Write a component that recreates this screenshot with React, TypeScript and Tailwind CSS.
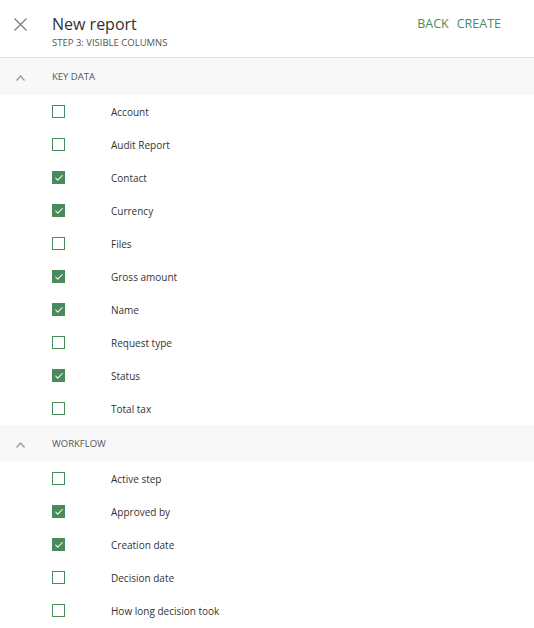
import { Check } from 'lucide-react'

type Column = { label: string; checked: boolean }

const sections: { title: string; columns: Column[] }[] = [
  {
    title: 'Key data',
    columns: [
      { label: 'Account', checked: false },
      { label: 'Audit Report', checked: false },
      { label: 'Contact', checked: true },
      { label: 'Currency', checked: true },
      { label: 'Files', checked: false },
      { label: 'Gross amount', checked: true },
      { label: 'Name', checked: true },
      { label: 'Request type', checked: false },
      { label: 'Status', checked: true },
      { label: 'Total tax', checked: false },
    ],
  },
  {
    title: 'Workflow',
    columns: [
      { label: 'Active step', checked: false },
      { label: 'Approved by', checked: true },
      { label: 'Creation date', checked: true },
      { label: 'Decision date', checked: false },
      { label: 'How long decision took', checked: false },
    ],
  },
]

function Checkbox({ checked }: { checked: boolean }) {
  return checked ? (
    <span className="flex h-[13px] w-[13px] items-center justify-center bg-[#4b8b5b]">
      <Check className="h-[10px] w-[10px] text-white" strokeWidth={2.5} />
    </span>
  ) : (
    <span className="h-[13px] w-[13px] border border-[#4b8b5b] bg-white" />
  )
}

export default function App() {
  return (
    <div className="min-h-screen bg-white text-[#333]" style={{ fontFamily: '"Open Sans", "Noto Sans", sans-serif' }}>
      <header className="flex h-[58px] items-start border-b border-[#e3e3e3] pt-[12px]">
        <button className="ml-[14px] mt-[6px] text-[#777]">
          <svg width="13" height="13" viewBox="0 0 13 13" fill="none" stroke="currentColor" strokeWidth="1.2">
            <path d="M0.5 0.5 L12.5 12.5 M12.5 0.5 L0.5 12.5" />
          </svg>
        </button>
        <div className="ml-[25px] flex flex-col">
          <h1 className="text-[16px] leading-[24px] text-[#333]">New report</h1>
          <p className="mt-[1px] text-[9.5px] uppercase leading-[12px] text-[#555]">Step 3: Visible columns</p>
        </div>
        <div className="ml-auto mr-[33px] mt-[4px] flex gap-[8px] text-[12.5px] leading-[16px] text-[#4b8b5b]">
          <button className="uppercase">Back</button>
          <button className="uppercase">Create</button>
        </div>
      </header>

      {sections.map((section) => (
        <section key={section.title}>
          <div className="flex h-[37px] items-center bg-[#f8f8f8] pt-[2px]">
            <svg className="ml-[16px] text-[#999]" width="9" height="6" viewBox="0 0 9 6" fill="none" stroke="currentColor" strokeWidth="1.2">
              <path d="M0.5 5.5 L4.5 1 L8.5 5.5" />
            </svg>
            <span className="ml-[27px] text-[9.5px] uppercase text-[#555]">{section.title}</span>
          </div>
          <ul>
            {section.columns.map((col) => (
              <li key={col.label} className="flex h-[33px] items-center">
                <span className="ml-[52px] flex">
                  <Checkbox checked={col.checked} />
                </span>
                <span className="ml-[46px] pt-[1px] text-[10px] text-[#333]">{col.label}</span>
              </li>
            ))}
          </ul>
        </section>
      ))}
    </div>
  )
}
